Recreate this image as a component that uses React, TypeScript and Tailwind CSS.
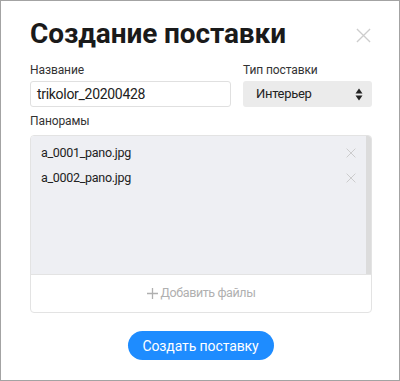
import React from "react";

function XIcon({ size, color, stroke }: { size: number; color: string; stroke: number }) {
  return (
    <svg width={size} height={size} viewBox="0 0 16 16" fill="none">
      <path d="M1 1L15 15M15 1L1 15" stroke={color} strokeWidth={stroke} />
    </svg>
  );
}

export default function App() {
  const files = ["a_0001_pano.jpg", "a_0002_pano.jpg"];
  return (
    <div className="w-[400px] h-[381px] bg-white border border-[#a3a3a3] font-['Roboto','Liberation_Sans',sans-serif] text-[#222]">
      <div className="pl-[29px] pr-[27px] pt-[15px]">
        <div className="flex justify-between items-start">
          <h1 className="text-[28px] font-bold leading-[36px] text-[#1a1a1a] tracking-[-0.1px]">Создание поставки</h1>
          <div className="mt-[12px] mr-[1px]">
            <XIcon size={15} color="#cdcdcd" stroke={1.4} />
          </div>
        </div>
        <div className="flex gap-[12px] mt-[10px]">
          <div className="w-[201px] flex flex-col">
            <label className="text-[12px] leading-[16px] text-[#333] tracking-[-0.1px]">Название</label>
            <div className="mt-[3px] h-[26px] border border-[#e0e0e0] rounded-[3px] flex items-center px-[6px] text-[14px] text-[#222] tracking-[-0.3px]">
              trikolor_20200428
            </div>
          </div>
          <div className="flex-1 flex flex-col">
            <label className="text-[12px] leading-[16px] text-[#333] tracking-[-0.1px]">Тип поставки</label>
            <div className="mt-[3px] h-[26px] bg-[#ebebeb] rounded-[3px] flex items-center justify-between pl-[13px] pr-[9px] text-[13px] text-[#222] tracking-[-0.3px]">
              <span>Интерьер</span>
              <svg width="8" height="13" viewBox="0 0 8 13">
                <path d="M4 0.5L7.5 5.5H0.5Z" fill="#222" />
                <path d="M4 12.5L7.5 7.5H0.5Z" fill="#222" />
              </svg>
            </div>
          </div>
        </div>
        <div className="mt-[6px] text-[12px] leading-[16px] text-[#333] tracking-[-0.1px]">Панорамы</div>
        <div className="mt-[6px] border border-[#e3e3e3] rounded-[4px] overflow-hidden">
          <div className="h-[138px] bg-[#eeeff3] flex">
            <div className="flex-1 flex flex-col pt-[8px] pl-[10px] pr-[10px] gap-[7px]">
              {files.map((f) => (
                <div key={f} className="flex items-center justify-between h-[18px] text-[12.5px] text-[#222] tracking-[-0.3px]">
                  <span>{f}</span>
                  <XIcon size={10} color="#c4c4c4" stroke={1.3} />
                </div>
              ))}
            </div>
            <div className="w-[5px] bg-[#dcdcdc]" />
          </div>
          <div className="h-[38px] border-t border-[#e3e3e3] flex items-center justify-center gap-[3px] text-[12.5px] text-[#b0b0b0] tracking-[-0.4px]">
            <svg width="11" height="11" viewBox="0 0 11 11">
              <path d="M5.5 0V11M0 5.5H11" stroke="#b0b0b0" strokeWidth="1.3" />
            </svg>
            <span>Добавить файлы</span>
          </div>
        </div>
        <div className="flex justify-center mt-[18px] pr-[1px]">
          <button className="w-[146px] h-[29px] rounded-full bg-[#1e8cff] text-white text-[14px] leading-none tracking-[-0.1px]">
            Создать поставку
          </button>
        </div>
      </div>
    </div>
  );
}
